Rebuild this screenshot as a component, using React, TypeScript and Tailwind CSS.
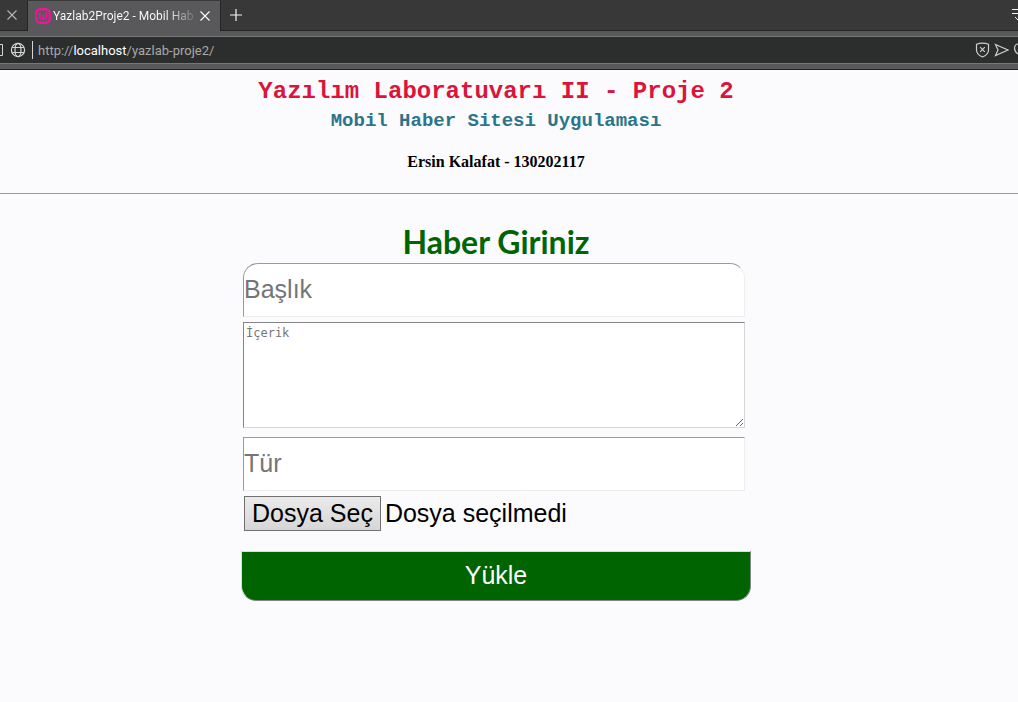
import React from "react";

function Globe() {
  return (
    <svg className="size-4 shrink-0" viewBox="0 0 16 16" fill="none" stroke="#d6d6d6" strokeWidth="1.2" aria-hidden="true">
      <circle cx="8" cy="8" r="6.6" />
      <ellipse cx="8" cy="8" rx="3" ry="6.6" />
      <path d="M2.2 5.5h11.6M2.2 10.5h11.6" />
    </svg>
  );
}

function Close({ color }: { color: string }) {
  return (
    <svg className="size-[10px]" viewBox="0 0 10 10" fill="none" stroke={color} strokeWidth="1.1" aria-hidden="true">
      <path d="M0.5 0.5l9 9M9.5 0.5l-9 9" />
    </svg>
  );
}

function BrowserChrome() {
  return (
    <header className="bg-[#59595b] font-['Roboto',sans-serif]">
      <div className="flex h-[31px] items-stretch border-b border-[#242424] bg-[#383838]">
        <button aria-label="Close previous tab" className="flex w-[27px] shrink-0 items-center pl-[7px]">
          <Close color="#b8b8b8" />
        </button>
        <div className="-mb-px mt-px flex w-[194px] shrink-0 items-center border-x border-[#242424] bg-[#59595b] pl-[7px]">
          <svg className="size-4 shrink-0" viewBox="0 0 16 16" fill="none" aria-hidden="true">
            <rect x="1.2" y="1.2" width="13.6" height="13.6" rx="4" stroke="#f0149b" strokeWidth="2.4" />
            <path d="M0 8h2.400M13.600 8h2.400" stroke="#59595b" strokeWidth="0.8" />
            <path d="M4.700 4.500v4.800q0 1.700 1.600 1.700T8 9.300V7v2.300q0 1.700 1.700 1.700t1.600-1.700V4.500" stroke="#f0149b" strokeWidth="1.6" />
          </svg>
          <span className="ml-[2px] w-[141px] bg-linear-to-r from-white from-80% to-[#77777a] bg-clip-text text-[12px] whitespace-nowrap text-transparent">
            Yazlab2Proje2 - Mobil Hab
          </span>
          <button aria-label="Close tab" className="ml-[6px]"><Close color="#ffffff" /></button>
        </div>
        <button aria-label="New tab" className="ml-[9px]">
          <svg className="size-3" viewBox="0 0 12 12" stroke="#f4f4f4" strokeWidth="1.2" aria-hidden="true">
            <path d="M0 6h12M6 0v12" />
          </svg>
        </button>
        <svg className="mt-2 ml-auto h-4 w-[6px]" viewBox="0 0 6 16" fill="none" stroke="#f4f4f4" strokeWidth="1" aria-hidden="true">
          <path d="M0 1.5h6M0 5.500h6M3 9l3 3" />
        </svg>
      </div>
      <div className="mt-[5px] flex h-[28px] items-center border-y border-[#777779] bg-[#2c2e2e]">
        <svg className="h-4 w-[10px] shrink-0" viewBox="0 0 10 16" fill="none" stroke="#d6d6d6" aria-hidden="true">
          <path d="M0 2.500h2.500v11H0" />
        </svg>
        <Globe />
        <span className="ml-[6px] h-[18px] w-px bg-[#d6d6d6]" />
        <span className="ml-[5px] pt-[2px] text-[13px] text-[#a9a9a9]">
          http://<span className="text-white">localhost</span>/yazlab-proje2/
        </span>
        <div className="ml-auto flex items-center">
          <svg className="h-4 w-[43px]" viewBox="0 0 43 16" fill="none" stroke="#cfcfcf" strokeWidth="1.2" aria-hidden="true">
            <path d="M1.500 2.200q3-1 6-1q3 0 6 1v5.800q0 4.500-6 7q-6-2.500-6-7z" />
            <path d="M5.200 5.200l4.600 4.600M9.800 5.200l-4.600 4.600" />
            <path d="M20.500 2.500L33 8L20.500 13.500L23 8z" />
            <path d="M43 2q-3 0-3.500 4q0 4 3.500 6" />
          </svg>
        </div>
      </div>
      <div className="h-[6px] border-b border-[#242424]" />
    </header>
  );
}

const field =
  "block h-[54px] w-full border border-t-[#9a9a9a] border-r-[#eeeeee] border-b-[#eeeeee] border-l-[#9a9a9a] bg-white pb-[2px] text-[25px] placeholder:text-[#757575]";

export default function App() {
  return (
    <div className="min-h-screen bg-[#fbfbfe]">
      <BrowserChrome />
      <div className="pr-[26px] text-center text-black">
        <h1 className="pt-2 font-['Liberation_Mono',monospace] text-[24px] leading-[28px] font-bold text-[#dc143c]">
          Yazılım Laboratuvarı II - Proje 2
        </h1>
        <h2 className="mt-1 font-['Liberation_Mono',monospace] text-[19px] leading-[22px] font-bold text-[#2a7589]">
          Mobil Haber Sitesi Uygulaması
        </h2>
        <p className="mt-[20px] font-['Liberation_Serif',serif] text-[16px] leading-[20px] font-bold">
          Ersin Kalafat - 130202117
        </p>
      </div>
      <hr className="mt-[21px] border-t border-[#999999]" />
      <main className="pr-[26px] font-['Liberation_Sans',sans-serif]">
        <h2 className="pt-[28px] text-center font-['Lato',sans-serif] text-[32px] leading-[40px] font-bold text-[#006400]">
          Haber Giriniz
        </h2>
        <form className="mx-auto w-full max-w-[510px]" onSubmit={(e) => e.preventDefault()}>
          <div className="mt-px pr-[6px] pl-[2px]">
            <input aria-label="Başlık" placeholder="Başlık" className={`${field} rounded-t-[15px]`} />
            <textarea
              aria-label="İçerik"
              placeholder="İçerik"
              className="mt-[5px] block h-[106px] w-full resize border border-t-[#858585] border-r-[#d5d5d5] border-b-[#d5d5d5] border-l-[#858585] bg-white p-[2px] font-['DejaVu_Sans_Mono',monospace] text-[12px] leading-[16px] placeholder:text-[#757575]"
            />
            <input aria-label="Tür" placeholder="Tür" className={`${field} mt-[9px]`} />
            <div className="mt-[5px] flex items-center pl-px text-[25px] leading-[33px]">
              <input id="file" type="file" className="peer sr-only" />
              <label
                htmlFor="file"
                className="border border-[#707070] bg-linear-to-b from-[#ebebeb] to-[#d6d6d6] px-[7px] whitespace-nowrap"
              >
                Dosya Seç
              </label>
              <span className="ml-1">Dosya seçilmedi</span>
            </div>
          </div>
          <button
            type="submit"
            className="mt-5 h-[50px] w-full rounded-b-[15px] border border-t-[#dddddd] border-r-[#858585] border-b-[#858585] border-l-[#dddddd] bg-[#006400] text-[25px] text-white"
          >
            Yükle
          </button>
        </form>
      </main>
    </div>
  );
}
